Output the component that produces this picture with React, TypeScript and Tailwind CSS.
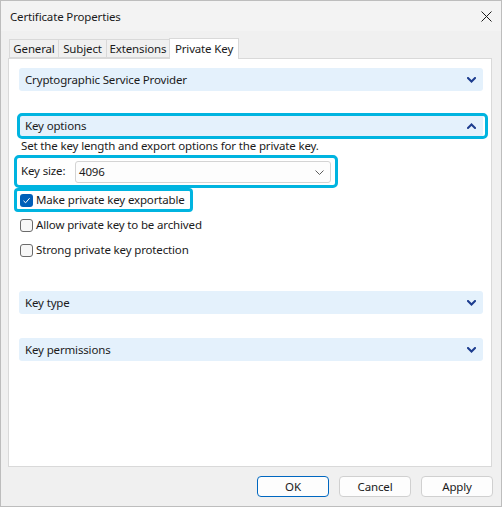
import React from 'react'

const font = { fontFamily: '"Noto Sans", "Liberation Sans", sans-serif' }

function Chevron({ up = false }: { up?: boolean }) {
  return (
    <svg className="w-[9px] h-[6px]" viewBox="0 0 9 6" fill="none">
      <path
        d={up ? 'M1 5 L4.5 1.5 L8 5' : 'M1 1 L4.5 4.5 L8 1'}
        stroke="#1d3d8f"
        strokeWidth={2}
        strokeLinecap="square"
      />
    </svg>
  )
}

function Section({ title, open = false }: { title: string; open?: boolean }) {
  return (
    <div className="flex items-center justify-between h-[23px] rounded-[3px] bg-[#e4f1fc] pl-[6px] pr-[7px]">
      <span className="text-[11.5px] text-[#1b1b1b]">{title}</span>
      <Chevron up={open} />
    </div>
  )
}

function Check({ checked = false, label }: { checked?: boolean; label: string }) {
  return (
    <label className="flex items-center h-[24px] gap-[3px] pl-[1px]">
      {checked ? (
        <span className="flex items-center justify-center w-[13px] h-[13px] rounded-[3px] bg-[#005fb8]">
          <svg className="w-[9px] h-[9px]" viewBox="0 0 9 9" fill="none">
            <path d="M1.5 4.8 L3.6 6.8 L7.6 2.2" stroke="white" strokeWidth={1} />
          </svg>
        </span>
      ) : (
        <span className="w-[13px] h-[13px] rounded-[3px] border border-[#6b6b6b] bg-[#f7f7f7]" />
      )}
      <span className="text-[11.5px] text-[#1b1b1b]">{label}</span>
    </label>
  )
}

function Tab({ label, width, active = false }: { label: string; width: string; active?: boolean }) {
  return active ? (
    <div className={`${width} h-[21px] -mb-px flex items-center justify-center bg-white border border-b-0 border-[#d9d9d9] text-[11.5px] text-[#1b1b1b] relative z-10`}>
      {label}
    </div>
  ) : (
    <div className={`${width} h-[19px] flex items-center justify-center bg-[#f0f0f0] border border-r-0 border-[#d9d9d9] text-[11.5px] text-[#1b1b1b]`}>
      {label}
    </div>
  )
}

function Button({ label, primary = false }: { label: string; primary?: boolean }) {
  return (
    <button
      className={
        primary
          ? 'w-[72px] h-[21px] rounded-[4px] bg-[#fdfdfd] border border-[#0067c0] text-[11.5px] text-[#1b1b1b]'
          : 'w-[72px] h-[21px] rounded-[4px] bg-[#fdfdfd] border border-[#d0d0d0] text-[11.5px] text-[#1b1b1b]'
      }
    >
      {label}
    </button>
  )
}

export default function App() {
  return (
    <div style={font} className="w-[502px] h-[507px] bg-[#f0f0f0] border border-[#bdbdbd] flex flex-col select-none tracking-[-0.15px]">
      {/* title bar */}
      <div className="h-[30px] shrink-0 bg-[#f3f3f3] flex items-center justify-between pl-[9px] pr-[9px] pt-[1px]">
        <span className="text-[11.5px] text-[#1b1b1b]">Certificate Properties</span>
        <svg className="w-[11px] h-[11px]" viewBox="0 0 11 11" fill="none">
          <path d="M0.5 0.5 L10.5 10.5 M10.5 0.5 L0.5 10.5" stroke="#1b1b1b" strokeWidth={1} />
        </svg>
      </div>

      {/* tabs + panel */}
      <div className="flex flex-col pl-[7px] pr-[9px] pt-[7px]">
        <div className="flex items-end pl-[1px] h-[20px]">
          <Tab label="General" width="w-[49px]" />
          <Tab label="Subject" width="w-[48px]" />
          <Tab label="Extensions" width="w-[63px]" />
          <Tab label="Private Key" width="w-[70px]" active />
        </div>
        <div className="h-[409px] bg-white border border-[#d9d9d9] pt-[9px] pl-[10px] pr-[8px] flex flex-col">
          <Section title="Cryptographic Service Provider" />

          <div className="relative mt-[23px]">
            <Section title="Key options" open />
            <div className="absolute -left-[2px] -right-[5px] -top-[1px] -bottom-[2px] rounded-[5px] border-[3px] border-[#00b4e0]" />
          </div>

          <div className="mt-[1px] h-[16px] pl-[2px] flex items-center text-[11.5px] text-[#1b1b1b]">
            Set the key length and export options for the private key.
          </div>

          <div className="relative mt-[7px] w-[312px] h-[22px] flex items-center">
            <span className="w-[56px] pl-[2px] -mt-[3px] text-[11.5px] text-[#1b1b1b]">Key size:</span>
            <div className="w-[256px] h-[22px] rounded-[3px] border border-[#d4d4d4] bg-[#fdfdfd] flex items-center justify-between pl-[3px] pr-[6px]">
              <span className="text-[11.5px] text-[#1b1b1b]">4096</span>
              <svg className="w-[9px] h-[5px]" viewBox="0 0 9 5" fill="none">
                <path d="M0.5 0.5 L4.5 4.5 L8.5 0.5" stroke="#5c5c5c" strokeWidth={1} />
              </svg>
            </div>
            <div className="absolute -left-[5px] -right-[7px] -top-[6px] -bottom-[5px] rounded-[5px] border-[3px] border-[#00b4e0]" />
          </div>

          <div className="mt-[5px] flex flex-col gap-[1px]">
            <div className="relative">
              <Check checked label="Make private key exportable" />
              <div className="absolute -left-[5px] w-[179px] top-0 bottom-0 rounded-[4px] border-[3px] border-[#00b4e0]" />
            </div>
            <Check label="Allow private key to be archived" />
            <Check label="Strong private key protection" />
          </div>

          <div className="mt-[29px]">
            <Section title="Key type" />
          </div>
          <div className="mt-[24px]">
            <Section title="Key permissions" />
          </div>
        </div>
      </div>

      {/* buttons */}
      <div className="flex justify-end gap-[10px] pr-[8px] pt-[9px]">
        <Button label="OK" primary />
        <Button label="Cancel" />
        <Button label="Apply" />
      </div>
    </div>
  )
}
